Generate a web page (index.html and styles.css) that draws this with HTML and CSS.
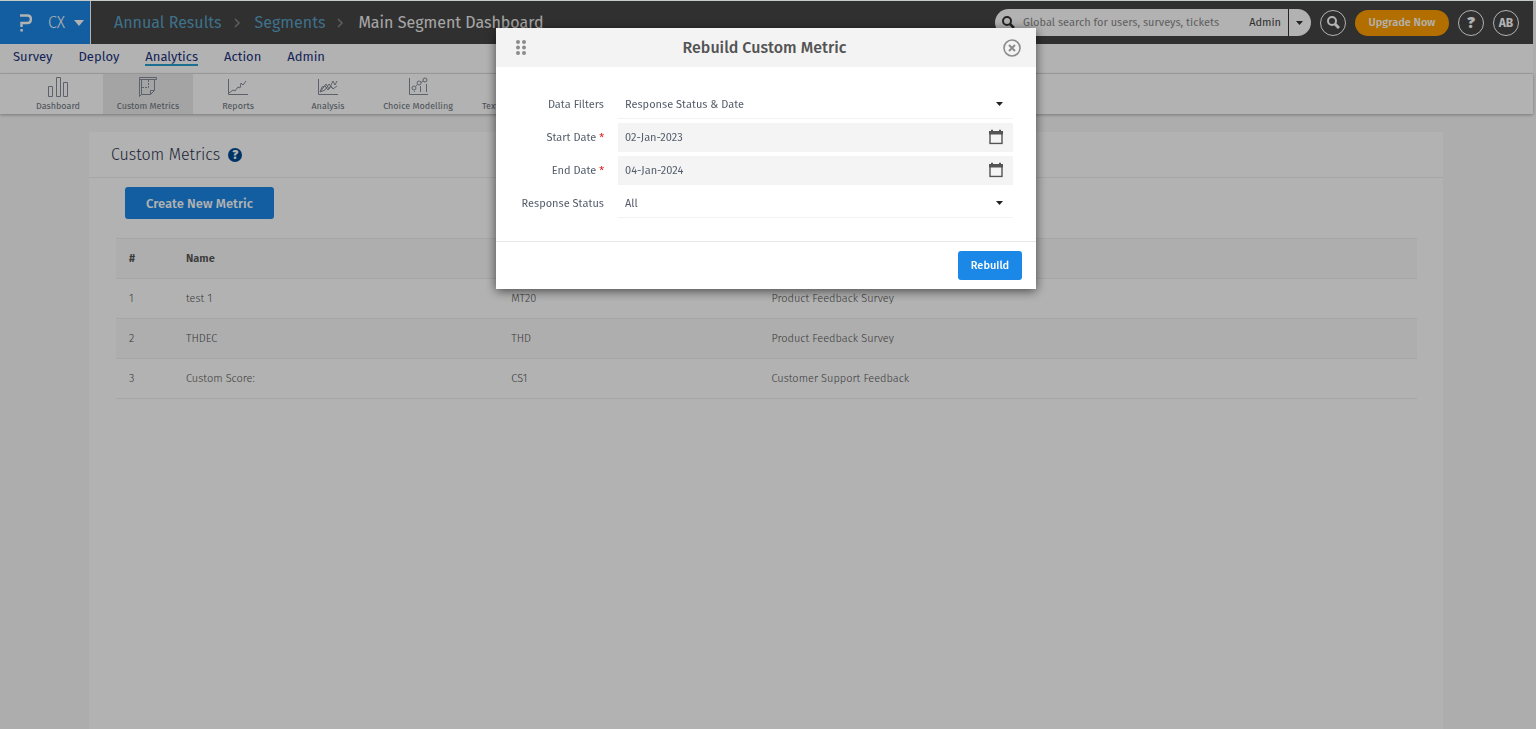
FILE: index.html
```html
<!DOCTYPE html>
<html lang="en">
<head>
    <meta charset="UTF-8">
    <meta name="viewport" content="width=device-width, initial-scale=1.0">
    <title>Custom Metrics</title>
    <link rel="stylesheet" href="styles.css">
</head>
<body>
    <header class="topbar">
        <button class="product" type="button">
            <svg width="12" height="18" viewBox="0 0 12 18" fill="none" stroke="#fff" stroke-width="2.4">
                <path d="M0 1.500h7.500q3.300 0 3.300 3.300v1q0 3.200-3.300 3.200H1.500v4"/>
                <path d="M.3 16.300h2.600"/>
            </svg>
            <span>CX</span>
            <svg width="10" height="6" viewBox="0 0 10 6"><path d="M0 0h10L5 6z" fill="#fff"/></svg>
        </button>
        <nav class="breadcrumb" aria-label="Breadcrumb">
            <a href="#">Annual Results</a>
            <svg width="6" height="10" viewBox="0 0 6 10" fill="none" stroke="#888" stroke-width="1.5"><path d="M1 1l4 4-4 4"/></svg>
            <a href="#">Segments</a>
            <svg width="6" height="10" viewBox="0 0 6 10" fill="none" stroke="#888" stroke-width="1.5"><path d="M1 1l4 4-4 4"/></svg>
            <span>Main Segment Dashboard</span>
        </nav>
        <div class="tools">
            <div class="search">
                <svg width="13" height="13" viewBox="0 0 13 13" fill="none" stroke="#333" stroke-width="2"><circle cx="5" cy="5" r="4"/><path d="M8 8l4 4" stroke-width="2.500"/></svg>
                <input type="text" aria-label="Global search" placeholder="Global search for users, surveys, tickets">
                <span class="scope">Admin</span>
                <button class="scope-toggle" type="button" aria-label="Search scope">
                    <svg width="7" height="4" viewBox="0 0 7 4"><path d="M0 0h7L3.500 4z" fill="#333"/></svg>
                </button>
            </div>
            <button class="circle" type="button" aria-label="Search">
                <svg width="13" height="13" viewBox="0 0 13 13" fill="none" stroke="#fff" stroke-width="2"><circle cx="5" cy="5" r="4"/><path d="M8 8l4 4" stroke-width="3"/></svg>
            </button>
            <button class="upgrade" type="button">Upgrade Now</button>
            <button class="circle help" type="button">?</button>
            <button class="circle" type="button">AB</button>
        </div>
    </header>

    <nav class="mainnav">
        <a href="#">Survey</a>
        <a href="#">Deploy</a>
        <a href="#" class="active">Analytics</a>
        <a href="#">Action</a>
        <a href="#">Admin</a>
    </nav>

    <nav class="subnav">
        <a href="#">
            <svg width="22" height="20" viewBox="0 0 22 20"><path d="M1.500 9.500h4v10h-4zM9.500.5h4v19h-4zM16.500 5.500h4v14h-4z"/></svg>
            Dashboard
        </a>
        <a href="#" class="active">
            <svg width="20" height="20" viewBox="0 0 20 20"><path d="M1.500.5h17v2h-17zM1.500 2.500v17l2-2v-15M3.500 17.500h9l4-4v-11M12.500 17.500v-4h4"/><path d="M4 10.500h6.500V3" stroke-dasharray="2 1"/></svg>
            Custom Metrics
        </a>
        <a href="#">
            <svg width="20" height="20" viewBox="0 0 20 20"><path d="M.5 2v15.500H20M1 16l4-3 2 1 3-4 2 1 1-5 2 2 3-4"/></svg>
            Reports
        </a>
        <a href="#">
            <svg width="20" height="20" viewBox="0 0 20 20"><path d="M.5 2v15.500H20M2 15l6-8 3 5 4-8 2 4 2-4"/><path d="M2 15l2-5 3-1 3 4 3-4 2 3 4-3M2 15l5-2 4-6 3 4"/></svg>
            Analysis
        </a>
        <a href="#">
            <svg width="20" height="20" viewBox="0 0 20 20"><path d="M1.500 1v16.500H20"/><circle cx="6" cy="11" r="2"/><circle cx="11" cy="6" r="2"/><circle cx="17" cy="3" r="2"/><path d="M7.500 9.500l2-2M13 5.500l2-1.500M6.500 14v1M12.500 9v6M18.500 7v8"/></svg>
            Choice Modelling
        </a>
        <a href="#">
            <svg width="20" height="20" viewBox="0 0 20 20"><path d="M2.500 1.500h15v14h-9l-4 4v-4h-2zM6 6h8M6 10h8"/></svg>
            Text Analysis
        </a>
    </nav>

    <main class="panel">
        <div class="panel-header">
            <h1>Custom Metrics</h1>
            <button class="info" type="button" aria-label="Help">?</button>
        </div>
        <div class="panel-body">
            <button class="btn create" type="button">Create New Metric</button>
            <table>
                <thead>
                    <tr><th class="num">#</th><th class="name">Name</th><th class="code">Code</th><th>Survey</th></tr>
                </thead>
                <tbody>
                    <tr><td>1</td><td>test 1</td><td>MT20</td><td>Product Feedback Survey</td></tr>
                    <tr><td>2</td><td>THDEC</td><td>THD</td><td>Product Feedback Survey</td></tr>
                    <tr><td>3</td><td>Custom Score:</td><td>CS1</td><td>Customer Support Feedback</td></tr>
                </tbody>
            </table>
        </div>
    </main>

    <div class="overlay">
        <dialog class="modal" open aria-labelledby="modalTitle">
            <div class="modal-header">
                <svg width="10" height="15" viewBox="0 0 10 15" fill="#8c8c8c"><circle cx="2" cy="2" r="2"/><circle cx="8" cy="2" r="2"/><circle cx="2" cy="7.500" r="2"/><circle cx="8" cy="7.500" r="2"/><circle cx="2" cy="13" r="2"/><circle cx="8" cy="13" r="2"/></svg>
                <h2 id="modalTitle">Rebuild Custom Metric</h2>
                <button class="close" type="button" aria-label="Close">
                    <svg width="18" height="18" viewBox="0 0 18 18" fill="none" stroke="#8c8c8c"><circle cx="9" cy="9" r="8" stroke-width="1.600"/><path d="M6 6l6 6M12 6l-6 6" stroke-width="2"/></svg>
                </button>
            </div>
            <form class="modal-body">
                <label for="filters">Data Filters</label>
                <div class="field">
                    <select id="filters"><option>Response Status &amp; Date</option></select>
                    <svg class="caret" width="7" height="4" viewBox="0 0 7 4"><path d="M0 0h7L3.500 4z" fill="#222"/></svg>
                </div>
                <label for="start">Start Date <em>*</em></label>
                <div class="field date">
                    <input id="start" type="text" value="02-Jan-2023">
                    <svg class="calendar" width="14" height="15" viewBox="0 0 14 15"><path d="M1 2.500h12v11.500H1z" fill="none" stroke="#545454" stroke-width="1.400"/><path d="M0 1.500h14V5H0zM2 0h2v2H2zM10 0h2v2h-2z" fill="#545454"/></svg>
                </div>
                <label for="end">End Date <em>*</em></label>
                <div class="field date">
                    <input id="end" type="text" value="04-Jan-2024">
                    <svg class="calendar" width="14" height="15" viewBox="0 0 14 15"><path d="M1 2.500h12v11.500H1z" fill="none" stroke="#545454" stroke-width="1.400"/><path d="M0 1.500h14V5H0zM2 0h2v2H2zM10 0h2v2h-2z" fill="#545454"/></svg>
                </div>
                <label for="status">Response Status</label>
                <div class="field">
                    <select id="status"><option>All</option></select>
                    <svg class="caret" width="7" height="4" viewBox="0 0 7 4"><path d="M0 0h7L3.500 4z" fill="#222"/></svg>
                </div>
            </form>
            <div class="modal-footer">
                <button class="btn rebuild" type="button">Rebuild</button>
            </div>
        </dialog>
    </div>
</body>
</html>
```

FILE: styles.css
```css
* {
    box-sizing: border-box;
}

body {
    margin: 0;
    padding: 1px 3px 0 0;
    min-height: 100vh;
    display: flex;
    flex-direction: column;
    background-color: #f8f8f8;
    color: #545e6b;
    font-family: "Fira Sans", Roboto, sans-serif;
    font-size: 11px;
}

button, input, select {
    font-family: inherit;
    font-size: inherit;
    color: inherit;
    border: none;
    padding: 0;
    margin: 0;
    background: none;
}

button {
    cursor: pointer;
}

a {
    text-decoration: none;
}

/* Top bar */
.topbar {
    display: flex;
    align-items: center;
    height: 43px;
    background-color: #454545;
}

.product {
    display: flex;
    align-items: center;
    align-self: stretch;
    gap: 9px;
    width: 91px;
    padding-left: 20px;
    background-color: #1b87e6;
    border-right: 1px solid #fff;
    color: #fff;
    font-size: 16px;
    font-weight: 300;
}

.product span {
    margin-left: 7px;
}

.breadcrumb {
    display: flex;
    align-items: center;
    gap: 12px;
    padding-left: 23px;
    color: #eee;
    font-size: 16px;
    white-space: nowrap;
}

.breadcrumb a {
    color: #5aa2c4;
}

.breadcrumb svg {
    margin-right: 3px;
}

.tools {
    display: flex;
    align-items: center;
    gap: 9px;
    margin-left: auto;
    padding-right: 14px;
}

.search {
    display: flex;
    align-items: center;
    width: 316px;
    height: 27px;
    padding-left: 7px;
    border-radius: 14px;
    background-color: #fff;
    overflow: hidden;
}

.search input {
    flex: 1;
    min-width: 0;
    padding-left: 8px;
}

.search input::placeholder {
    color: #888;
    opacity: 1;
}

.scope {
    padding-right: 7px;
    color: #444;
}

.scope-toggle {
    display: flex;
    align-items: center;
    justify-content: center;
    align-self: stretch;
    width: 23px;
    padding-right: 1px;
    border-left: 1px solid #333;
}

.circle {
    display: flex;
    align-items: center;
    justify-content: center;
    width: 26px;
    height: 26px;
    border: 1px solid #fff;
    border-radius: 50%;
    color: #fff;
    font-size: 12px;
    font-weight: 700;
}

.help {
    font-size: 16px;
    font-weight: 900;
}

.upgrade {
    width: 94px;
    height: 26px;
    border-radius: 13px;
    background-color: #ff9f00;
    color: #fff;
    font-weight: 500;
}

/* Navigation */
.mainnav {
    display: flex;
    align-items: flex-start;
    gap: 26px;
    height: 30px;
    padding: 5px 13px 0;
    border-bottom: 1px solid #e4e4e4;
    background-color: #fff;
    font-size: 13px;
    line-height: 16px;
}

.mainnav a {
    color: #1b3380;
}

.mainnav .active {
    border-bottom: 2px solid #2a9fd0;
    line-height: 15px;
}

.subnav {
    display: flex;
    height: 40px;
    padding-left: 13px;
    background-color: #fff;
    box-shadow: 0 1px 3px rgba(0, 0, 0, 0.3);
}

.subnav a {
    display: flex;
    flex-direction: column;
    align-items: center;
    gap: 3px;
    width: 90px;
    padding-top: 3px;
    color: #6c7480;
    font-size: 9px;
    line-height: 12px;
}

.subnav .active {
    background-color: #ebebeb;
}

.subnav svg {
    fill: none;
    stroke: #868c98;
}

/* Page content */
.panel {
    flex: 1;
    margin: 18px 90px 0 89px;
    background-color: #fff;
}

.panel-header {
    display: flex;
    align-items: center;
    gap: 8px;
    height: 46px;
    padding-left: 22px;
    border-bottom: 1px solid #eee;
}

h1 {
    margin: 0;
    color: #2b3350;
    font-size: 16px;
    font-weight: 300;
}

.info {
    width: 14px;
    height: 14px;
    border-radius: 50%;
    background-color: #004b93;
    color: #fff;
    font-size: 12px;
    font-weight: 900;
    line-height: 14px;
}

.panel-body {
    padding: 9px 26px 0 27px;
}

.btn {
    border-radius: 3px;
    background-color: #1b87e6;
    color: #fff;
    font-weight: 500;
}

.create {
    display: block;
    width: 149px;
    height: 32px;
    margin: 0 0 19px 9px;
    font-size: 13px;
}

table {
    width: 100%;
    border-collapse: collapse;
    table-layout: fixed;
    color: #555;
    text-align: left;
    font-weight: 300;
}

tr {
    height: 40px;
    border-top: 1px solid #eee;
    border-bottom: 1px solid #eee;
}

thead tr, tbody tr:nth-child(even) {
    background-color: #f9f9f9;
}

th, td {
    padding: 0 13px;
}

th {
    font-weight: 600;
}

.num {
    width: 57px;
}

.name {
    width: 25%;
}

.code {
    width: 20%;
}

/* Modal */
.overlay {
    position: fixed;
    inset: 0;
    padding: 27px 4px 0 0;
    border-top: 1px solid #c5cbc8;
    background-color: rgba(0, 0, 0, 0.3);
    background-clip: padding-box;
}

.modal {
    position: static;
    width: 540px;
    margin: 0 auto;
    padding: 0;
    border: none;
    background-color: #fff;
    color: #545e6b;
    box-shadow: 0 2px 10px rgba(0, 0, 0, 0.6);
}

.modal-header {
    display: flex;
    align-items: center;
    height: 39px;
    padding: 0 15px 0 20px;
    background-color: #f3f3f3;
}

h2 {
    flex: 1;
    margin: 0;
    color: #545454;
    font-size: 16px;
    font-weight: 500;
    text-align: center;
}

.close {
    display: flex;
}

.modal-body {
    display: grid;
    grid-template-columns: 108px 1fr;
    grid-auto-rows: 29px;
    gap: 4px 14px;
    align-items: center;
    padding: 23px 23px 23px 0;
}

.modal-body label {
    text-align: right;
}

.modal-body em {
    color: #e02020;
    font-style: normal;
}

.field {
    display: flex;
    position: relative;
    height: 29px;
    border-bottom: 1px solid #f3f3f3;
}

.field input, .field select {
    width: 100%;
    padding-left: 7px;
    appearance: none;
}

.date {
    background-color: #f4f4f4;
}

.caret, .calendar {
    position: absolute;
    top: 50%;
    right: 10px;
    transform: translateY(-50%);
    pointer-events: none;
}

.modal-footer {
    display: flex;
    justify-content: flex-end;
    padding: 9px 14px;
    border-top: 1px solid #e6e6e6;
}

.rebuild {
    width: 64px;
    height: 29px;
}
```
